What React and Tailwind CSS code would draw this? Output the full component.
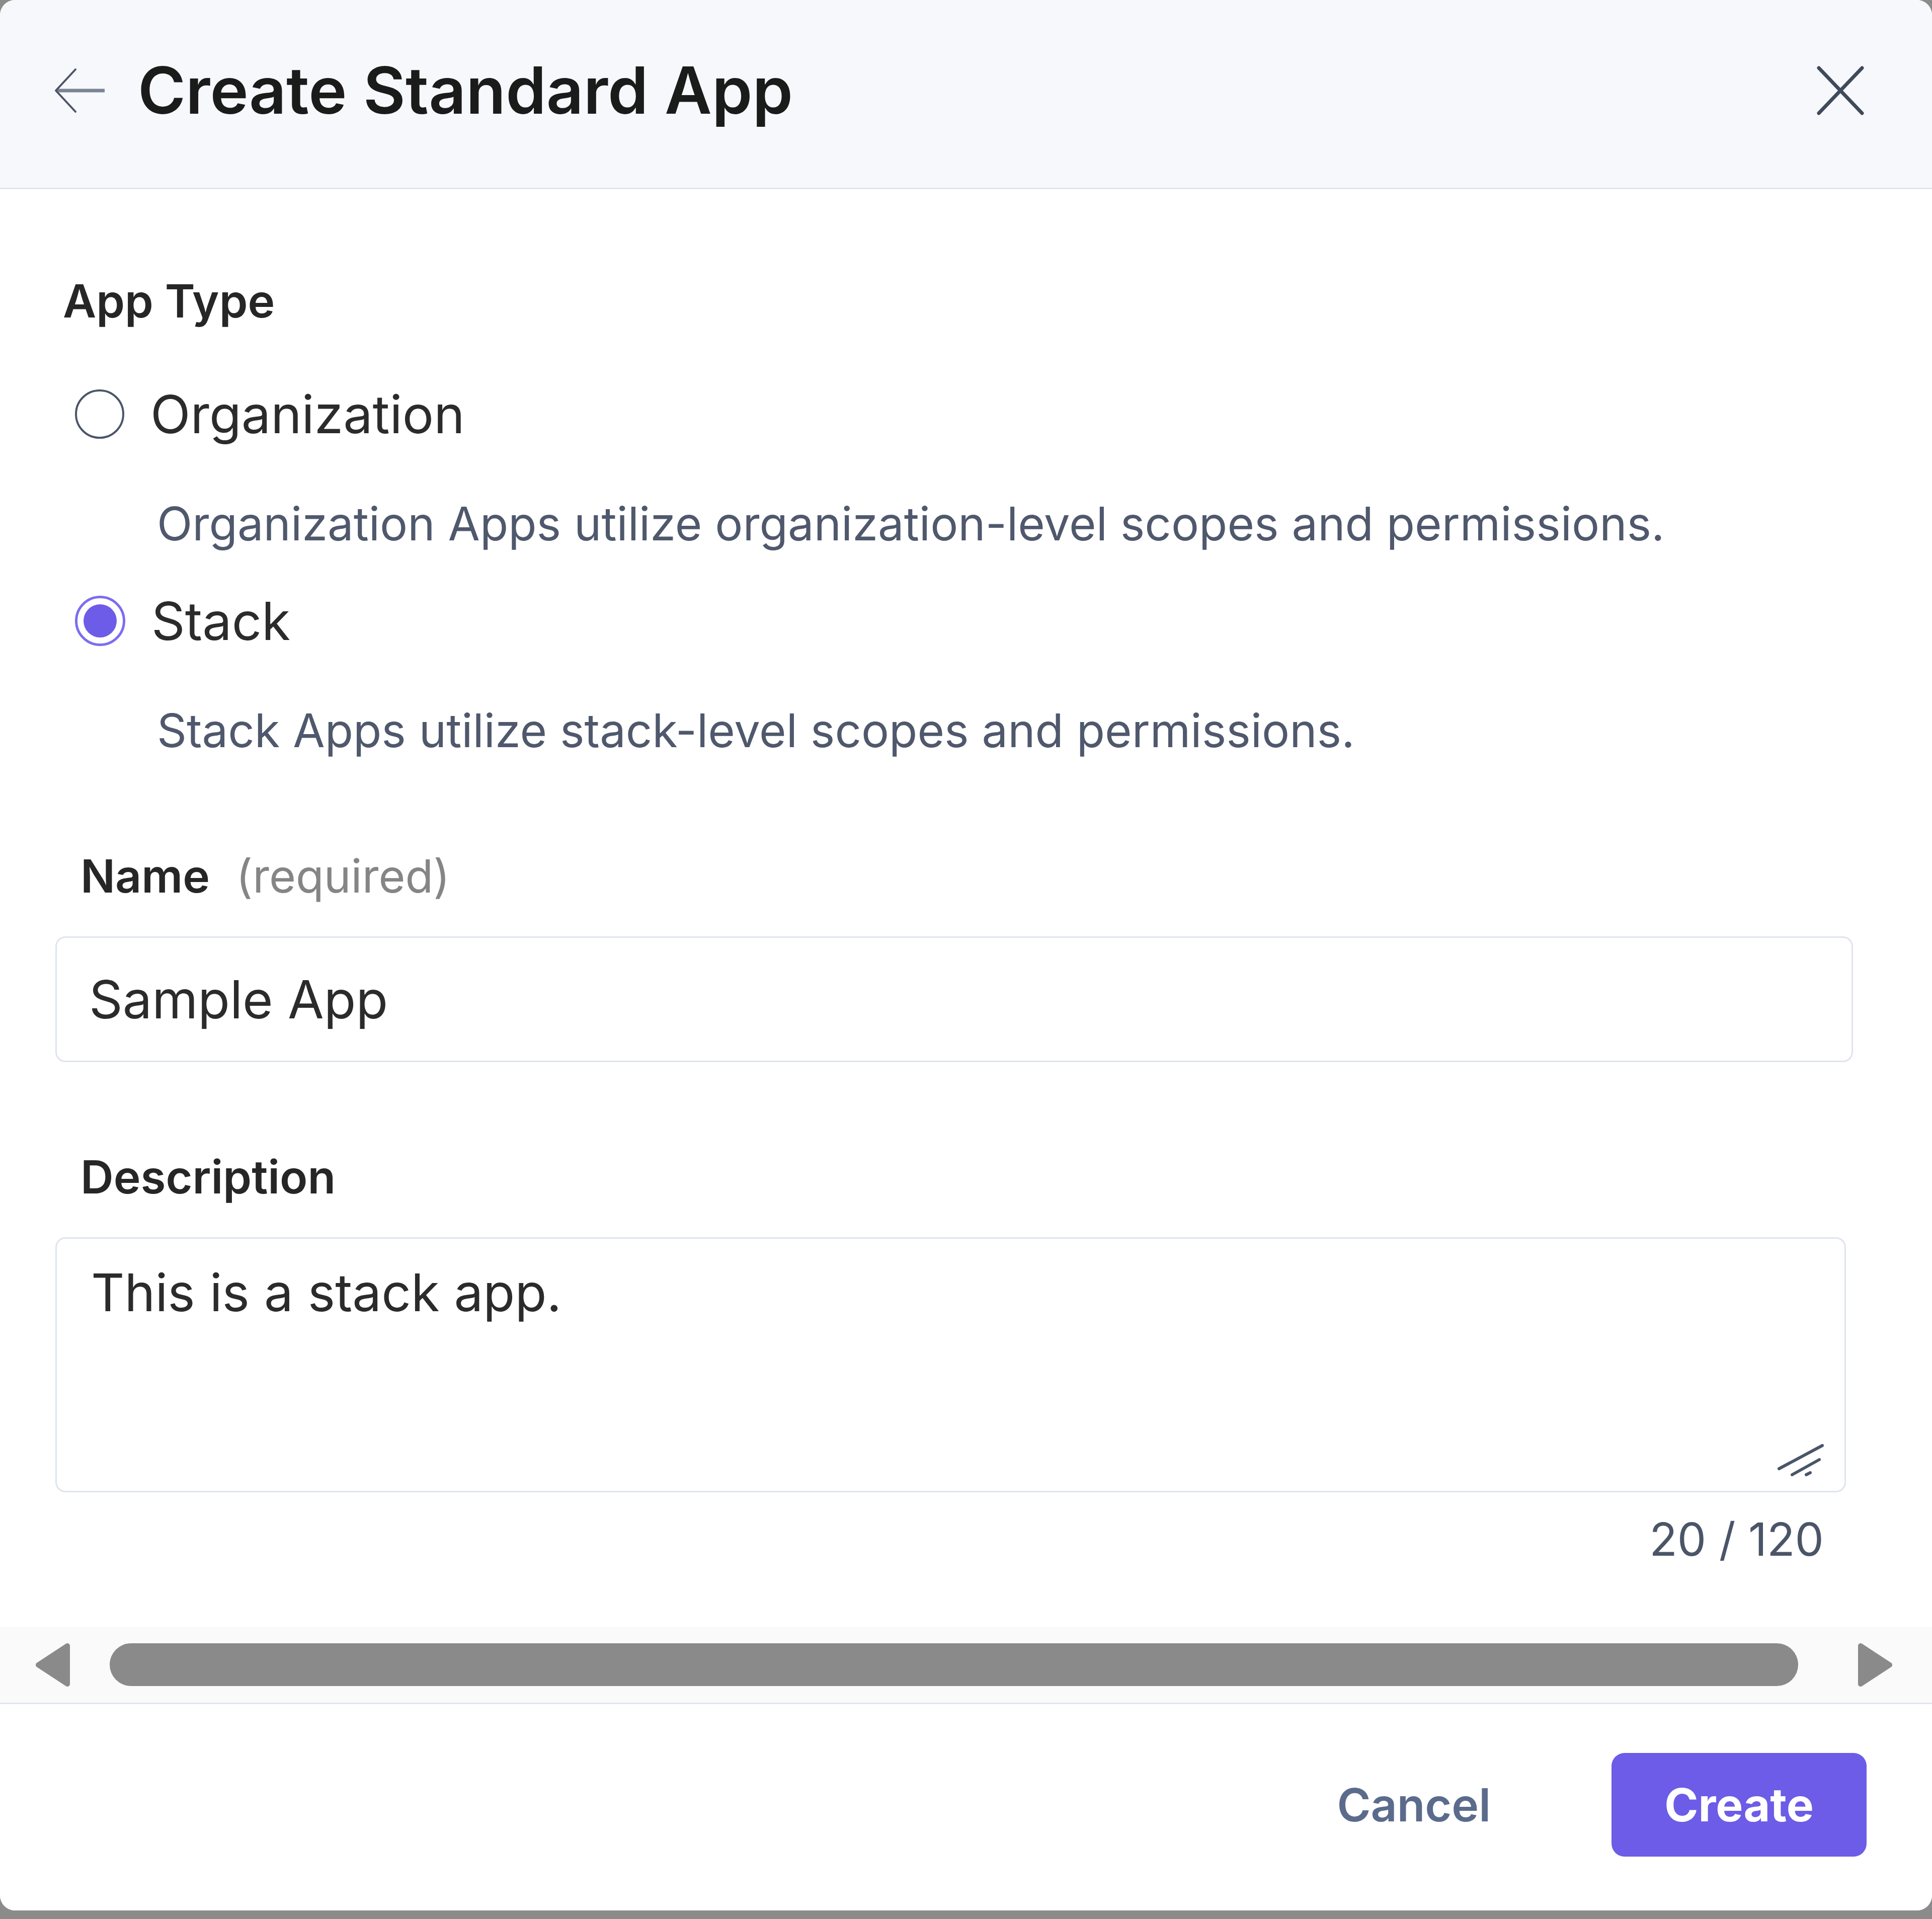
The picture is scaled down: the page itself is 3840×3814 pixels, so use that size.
import React from "react";

function BackArrow() {
  return (
    <svg width="102" height="90" viewBox="0 0 102 90" fill="none">
      <path d="M100 45H5" stroke="#7a8494" strokeWidth="7" />
      <path d="M42 3L3 45L42 87" stroke="#4b5566" strokeWidth="4" strokeLinecap="round" strokeLinejoin="round" />
    </svg>
  );
}

function CloseIcon() {
  return (
    <svg width="96" height="100" viewBox="0 0 96 100" fill="none">
      <path d="M5 5L91 95M91 5L5 95" stroke="#3f4a5c" strokeWidth="7" strokeLinecap="round" />
    </svg>
  );
}

function Radio({ checked, label }) {
  return (
    <div className="flex items-center h-[120px] ml-[149px]">
      {checked ? (
        <span className="flex items-center justify-center w-[100px] h-[100px] rounded-full border-[5px] border-[#7b6df0] bg-white">
          <span className="w-[66px] h-[66px] rounded-full bg-[#6c5ce7]" />
        </span>
      ) : (
        <span className="w-[98px] h-[98px] rounded-full border-[4px] border-[#4a5568] bg-white" />
      )}
      <span className="ml-[52px] text-[104px] leading-[120px] text-[#2b2b2b]">{label}</span>
    </div>
  );
}

function Triangle({ dir }) {
  const d = dir === "left" ? "M66 6L8 44L66 82Z" : "M6 6L64 44L6 82Z";
  return (
    <svg width="72" height="88" viewBox="0 0 72 88">
      <path d={d} fill="#8a8a8a" stroke="#8a8a8a" strokeWidth="10" strokeLinejoin="round" />
    </svg>
  );
}

export default function App() {
  return (
    <div className="w-[3840px] h-[3814px] bg-[#8b8b8b] font-['Inter','Noto_Sans',sans-serif]">
      <div className="flex flex-col w-full h-[3797px] bg-white rounded-[30px] overflow-hidden">
        {/* Header */}
        <div className="flex items-center shrink-0 h-[376px] bg-[#f7f8fb] border-b-[3px] border-[#e1e5ee] pl-[108px] pr-[134px] pb-[14px]">
          <BackArrow />
          <h1 className="ml-[64px] text-[129px] leading-none font-semibold text-[#1b1b1b]">
            Create Standard App
          </h1>
          <button className="ml-auto">
            <CloseIcon />
          </button>
        </div>

        {/* Body */}
        <div className="flex flex-col shrink-0 h-[2857px] bg-white">
          <div className="mt-[157px] ml-[125px] h-[130px] text-[91px] leading-[130px] font-semibold text-[#262626]">
            App Type
          </div>

          <div className="mt-[100px]">
            <Radio label="Organization" />
          </div>
          <p className="mt-[98px] ml-[312px] h-[120px] text-[92px] leading-[120px] text-[#4f586c]">
            Organization Apps utilize organization-level scopes and permissions.
          </p>

          <div className="mt-[73px]">
            <Radio checked label="Stack" />
          </div>
          <p className="mt-[98px] ml-[312px] h-[120px] text-[92px] leading-[120px] text-[#4f586c]">
            Stack Apps utilize stack-level scopes and permissions.
          </p>

          <div className="flex items-baseline mt-[164px] ml-[160px] h-[130px] text-[91px] leading-[130px]">
            <span className="font-semibold text-[#262626]">Name</span>
            <span className="ml-[52px] text-[#858585]">(required)</span>
          </div>
          <div className="flex items-center mt-[55px] ml-[110px] w-[3573px] h-[250px] border-[3px] border-[#dfe4ee] rounded-[20px] pl-[64px] text-[104px] text-[#2b2b2b]">
            Sample App
          </div>

          <div className="mt-[163px] ml-[160px] h-[130px] text-[91px] leading-[130px] font-semibold text-[#262626]">
            Description
          </div>
          <div className="relative mt-[55px] ml-[110px] w-[3559px] h-[507px] border-[3px] border-[#dfe4ee] rounded-[20px] pl-[68px] pt-[42px] text-[103px] leading-[130px] text-[#2b2b2b]">
            This is a stack app.
            <svg className="absolute right-[38px] bottom-[28px]" width="96" height="66" viewBox="0 0 96 66" fill="none">
              <path d="M4 50L90 4M30 62L84 32M58 62L66 58" stroke="#4a5568" strokeWidth="6" strokeLinecap="round" />
            </svg>
          </div>
          <div className="mt-[33px] mr-[215px] h-[120px] text-right text-[91px] leading-[120px] text-[#4a5568]">
            20 / 120
          </div>
        </div>

        {/* Horizontal scrollbar */}
        <div className="flex items-center shrink-0 h-[154px] bg-[#fafafa] border-b-[3px] border-[#e1e5ee] pl-[68px] pr-[76px]">
          <Triangle dir="left" />
          <div className="ml-[78px] mr-[118px] flex-1 h-[85px] rounded-full bg-[#8a8a8a]" />
          <Triangle dir="right" />
        </div>

        {/* Footer */}
        <div className="flex items-center justify-end flex-1 pr-[130px] pb-[10px] bg-white">
          <button className="text-[91px] font-semibold text-[#5b6b8c] mr-[240px]">Cancel</button>
          <button className="flex items-center justify-center w-[507px] h-[206px] rounded-[26px] bg-[#6c5ce7] text-[91px] font-bold text-white">
            Create
          </button>
        </div>
      </div>
    </div>
  );
}
